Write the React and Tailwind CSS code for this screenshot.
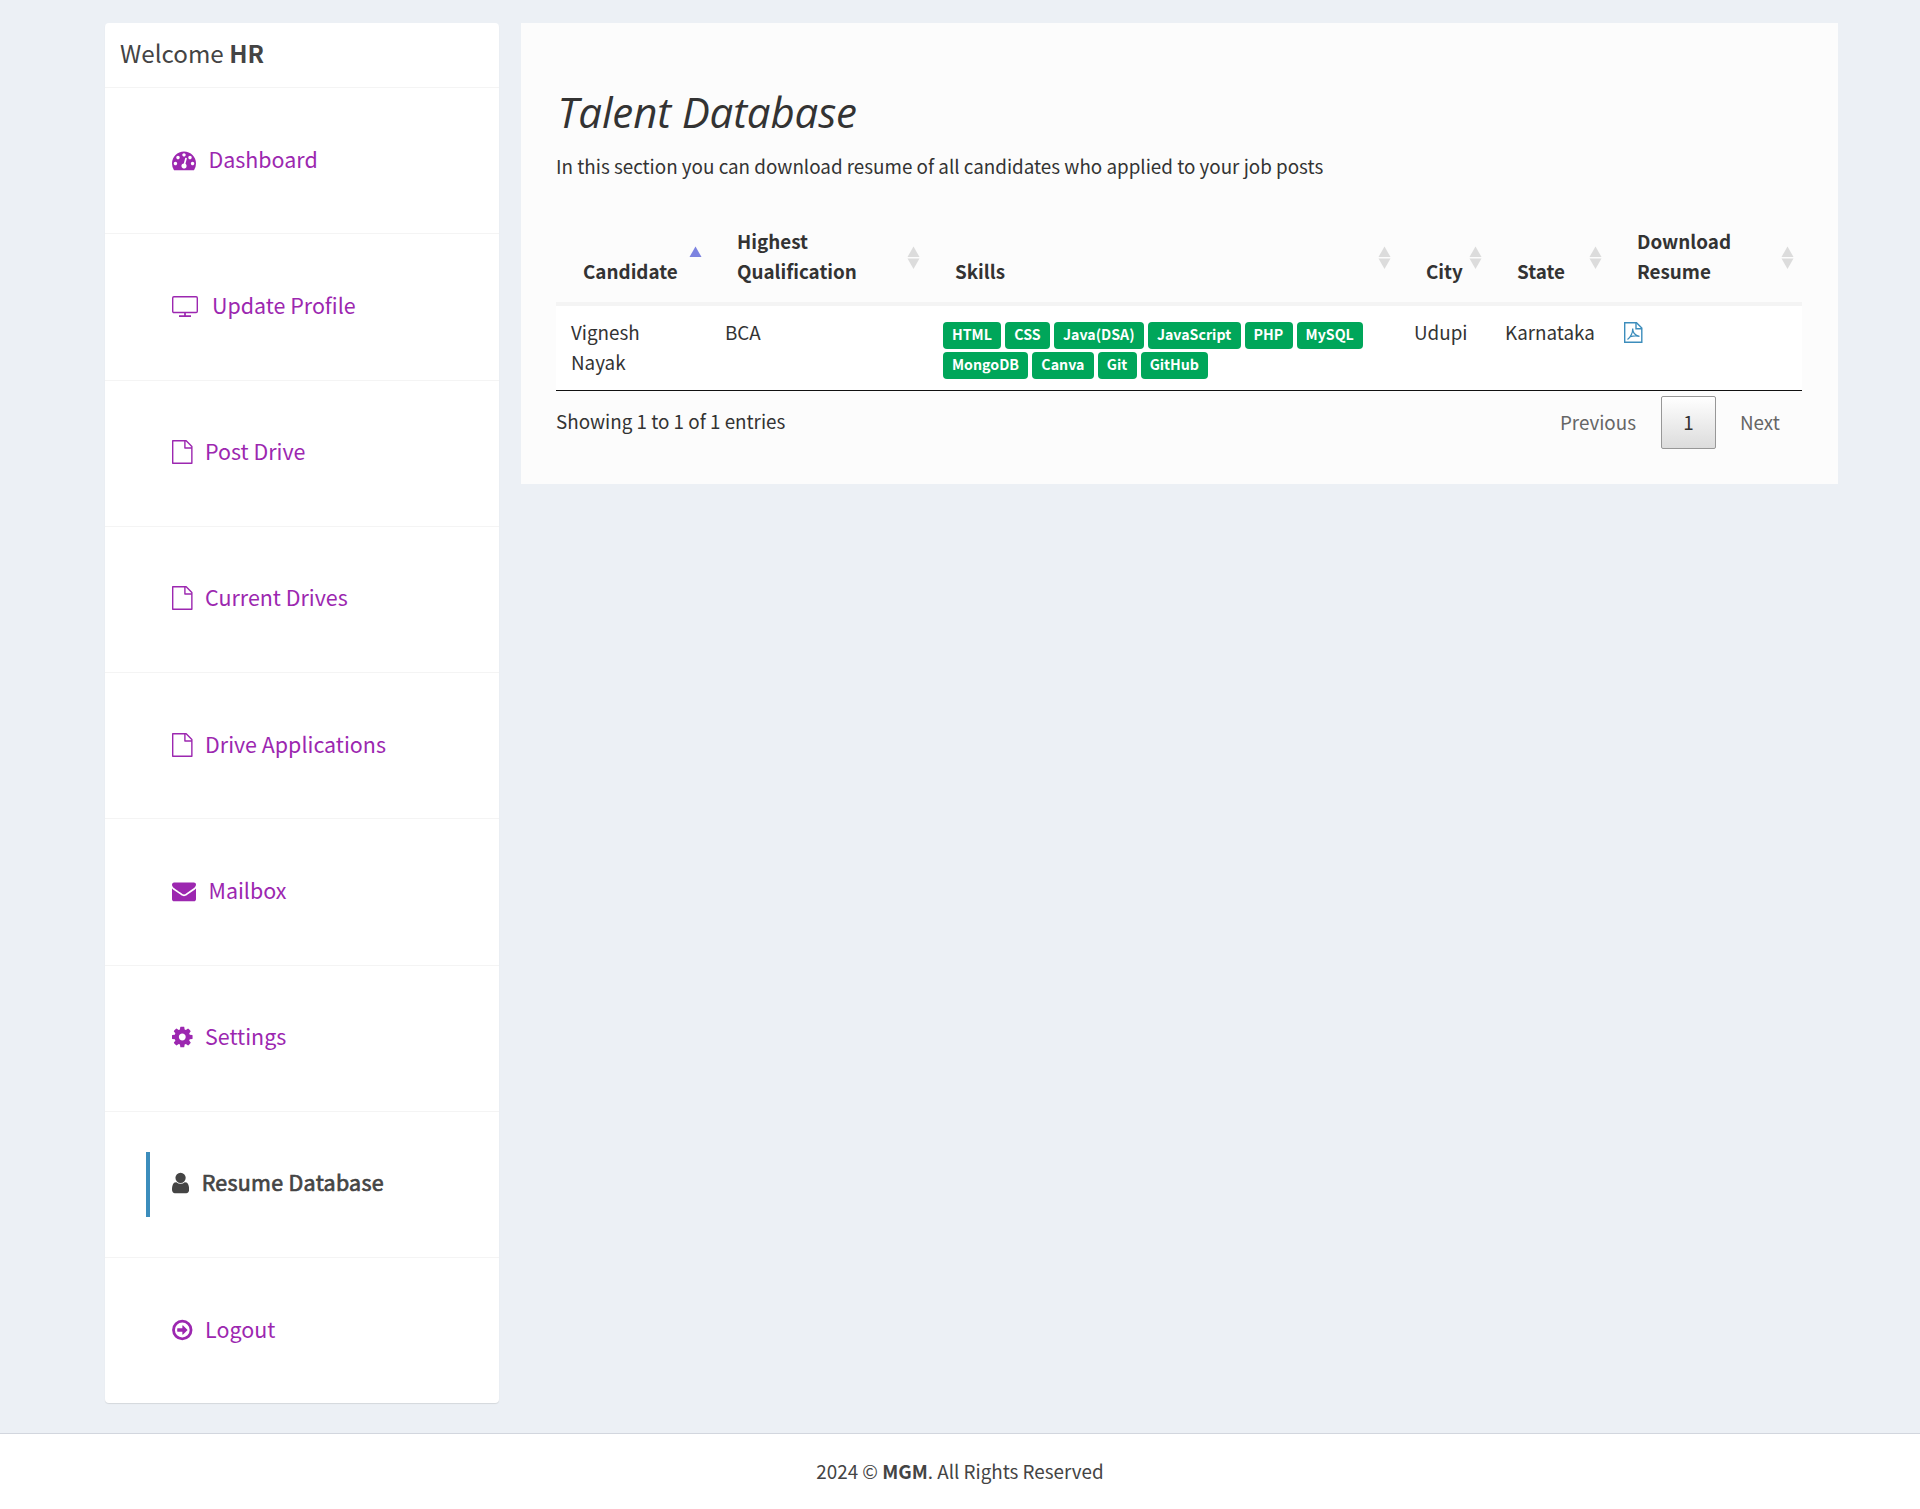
import React from "react";

const SHAPES = {
  dashboard: {
    w: 24, vb: "0 0 1792 1792",
    d: "M384 1152q0-53-37.5-90.5t-90.5-37.5-90.5 37.5-37.5 90.5 37.5 90.5 90.5 37.5 90.5-37.5 37.5-90.5zm192-448q0-53-37.5-90.5t-90.5-37.5-90.5 37.5-37.5 90.5 37.5 90.5 90.5 37.5 90.5-37.5 37.5-90.5zm428 481l101-382q6-26-7.5-48.5t-38.5-29.5-48 6.5-30 39.5l-101 382q-60 5-107 43.5t-63 98.5q-20 77 20 146t117 89 146-20 89-117q16-60-6-117t-72-91zm660-33q0-53-37.5-90.5t-90.5-37.5-90.5 37.5-37.5 90.5 37.5 90.5 90.5 37.5 90.5-37.5 37.5-90.5zm-640-640q0-53-37.5-90.5t-90.5-37.5-90.5 37.5-37.5 90.5 37.5 90.5 90.5 37.5 90.5-37.5 37.5-90.5zm448 192q0-53-37.5-90.5t-90.5-37.5-90.5 37.5-37.5 90.5 37.5 90.5 90.5 37.5 90.5-37.5 37.5-90.5zm320 448q0 261-141 483-19 29-54 29h-1402q-35 0-54-29-141-221-141-483 0-182 71-348t191-286 286-191 348-71 348 71 286 191 191 286 71 348z",
  },
  mail: {
    w: 24, vb: "0 0 1792 1792",
    d: "M1792 710v794q0 66-47 113t-113 47h-1472q-66 0-113-47t-47-113v-794q44 49 101 87 362 246 497 345 57 42 92.500 65.500t94.500 48 110 24.500h2q51 0 110-24.500t94.500-48 92.500-65.500q170-123 498-345 57-39 100-87zm0-294q0 79-49 151t-122 123q-376 261-468 325-10 7-42.500 30.500t-54 38-52 32.500-57.500 27-50 9h-2q-23 0-50-9t-57.500-27-52-32.500-54-38-42.500-30.500q-91-64-262-182.500t-205-142.500q-62-42-117-115.500t-55-136.500q0-78 41.500-130t118.500-52h1472q65 0 112.500 47t47.500 113z",
  },
  cog: {
    w: 20.57, vb: "128 0 1536 1792",
    d: "M1152 896q0-106-75-181t-181-75-181 75-75 181 75 181 181 75 181-75 75-181zm512-109v222q0 12-8 23t-20 13l-185 28q-19 54-39 91 35 50 107 138 10 12 10 25t-9 23q-27 37-99 108t-94 71q-12 0-26-9l-138-108q-44 23-91 38-16 136-29 186-7 28-36 28h-222q-14 0-24.500-8.500t-11.500-21.500l-28-184q-49-16-90-37l-141 107q-10 9-25 9-14 0-25-11-126-114-165-168-7-10-7-23 0-12 8-23 15-21 51-66.500t54-70.500q-27-50-41-99l-183-27q-13-2-21-12.500t-8-23.500v-222q0-12 8-23t19-13l186-28q14-46 39-92-40-57-107-138-10-12-10-24 0-10 9-23 26-36 98.500-107.500t94.500-71.500q13 0 26 10l138 107q44-23 91-38 16-136 29-186 7-28 36-28h222q14 0 24.500 8.500t11.500 21.500l28 184q49 16 90 37l142-107q9-9 24-9 13 0 25 10 129 119 165 170 7 8 7 22 0 12-8 23-15 21-51 66.500t-54 70.500q26 50 41 98l183 28q13 2 21 12.500t8 23.500z",
  },
  user: {
    w: 17.14, vb: "256 0 1280 1792",
    d: "M1536 1399q0 109-62.500 187t-150.500 78h-854q-88 0-150.500-78t-62.500-187q0-85 8.500-160.500t31.500-152 58.500-131 94-89 134.500-34.500q131 128 313 128t313-128q76 0 134.500 34.500t94 89 58.500 131 31.500 152 8.500 160.500zm-256-887q0 159-112.500 271.500t-271.500 112.500-271.500-112.500-112.500-271.500 112.500-271.500 271.500-112.500 271.500 112.500 112.500 271.500z",
  },
};

function Icon({ name }) {
  if (name === "logout") {
    return (
      <svg className="h-6 shrink-0" width="20.57" viewBox="128 0 1536 1792" fill="currentColor">
        <circle cx="896" cy="896" r="656" fill="none" stroke="currentColor" strokeWidth="208" />
        <path d="M1285 896q0 14-9 23l-320 320q-9 9-23 9-13 0-22.500-9.500t-9.500-22.500v-192h-352q-13 0-22.500-9.500t-9.500-22.500v-192q0-13 9.500-22.500t22.500-9.500h352v-192q0-14 9-23t23-9q12 0 24 10l319 319q9 9 9 23z" />
      </svg>
    );
  }
  if (name === "tv") {
    return (
      <svg className="mr-[1.5px] h-6 shrink-0" width="26" viewBox="0 0 26 24" fill="none" stroke="currentColor">
        <rect x="0.7" y="2.7" width="24.6" height="15.8" rx="1.2" strokeWidth="1.4" />
        <path d="M13 19v3M7 22.200h12" strokeWidth="1.700" />
      </svg>
    );
  }
  if (name === "file") {
    return (
      <svg className="h-6 shrink-0" width="20.57" viewBox="0 0 20.570 24" fill="none" stroke="currentColor" strokeWidth="1.400" strokeLinejoin="round">
        <path d="M0.700 0.700H14.200L19.870 6.400V23.300H0.700z" />
        <path d="M12.900 0.700V8H19.870" />
      </svg>
    );
  }
  const shape = SHAPES[name];
  return (
    <svg className="h-6 shrink-0" width={shape.w} viewBox={shape.vb} fill="currentColor">
      <path d={shape.d} />
    </svg>
  );
}

const NAV = [
  ["dashboard", "Dashboard"],
  ["tv", "Update Profile"],
  ["file", "Post Drive"],
  ["file", "Current Drives"],
  ["file", "Drive Applications"],
  ["mail", "Mailbox"],
  ["cog", "Settings"],
  ["user", "Resume Database"],
  ["logout", "Logout"],
];

const COLUMNS = [
  ["Candidate", "w-[154px]"],
  ["Highest Qualification", "w-[218px]"],
  ["Skills", "w-[471px]"],
  ["City", "w-[91px]"],
  ["State", "w-[120px]"],
  ["Download Resume", "w-[192px]"],
];

const SKILLS = ["HTML", "CSS", "Java(DSA)", "JavaScript", "PHP", "MySQL", "MongoDB", "Canva", "Git", "GitHub"];

function SortMark({ active }) {
  return (
    <svg width="13" height="24" viewBox="0 0 13 24" className="mt-px shrink-0">
      <path d="M6.500 0.500L12.500 11H0.500z" fill={active ? "#7c83e0" : "#dcdcdc"} />
      {!active && <path d="M0.500 12.500H12.500L6.500 23z" fill="#dcdcdc" />}
    </svg>
  );
}

export default function App() {
  return (
    <div className="flex h-[1509px] w-[1920px] flex-col overflow-hidden bg-[#ecf0f5] font-['Noto_Sans_CJK_SC',sans-serif] text-[18.82px] leading-[30px] text-[#333]">
      <div className="flex flex-1 items-start gap-[22px] pt-[23px] pl-[105px]">
        <aside className="w-[394px] rounded-[4px] bg-white text-[#444] shadow-[0_1px_1px_rgba(0,0,0,0.1)]">
          <h3 className="h-[64px] px-[15px] pt-[15px] text-[24.2px] leading-[30px]">
            Welcome <b>HR</b>
          </h3>
          <ul>
            {NAV.map(([icon, label]) => {
              const active = label === "Resume Database";
              return (
                <li key={label} className="flex h-[146.25px] items-center border-t border-[#f4f4f4] pl-[41px]">
                  <a className={active
                    ? "flex h-[65px] items-center gap-[12.5px] border-l-4 border-[#3c8dbc] pb-[2px] pl-[22px] text-[21.45px] text-[#444]"
                    : "flex h-[65px] items-center gap-[12.5px] border-l-4 border-transparent pb-[2px] pl-[22px] text-[21.45px] text-[#9c27b0]"}>
                    <Icon name={icon} />
                    <span className={active ? "pb-[2px] tracking-[0.3px] [-webkit-text-stroke:0.7px_#444]" : "pb-[2px]"}>{label}</span>
                  </a>
                </li>
              );
            })}
          </ul>
        </aside>
        <main className="h-[461px] w-[1317px] bg-[#fcfcfc] px-[35px] pt-[64px]">
          <h2 className="h-[50px] pl-[1.5px] font-['Open_Sans',sans-serif] text-[42px] leading-[50px] tracking-[-0.15px] italic">
            Talent Database
          </h2>
          <p className="mt-[14px] h-[30px]">
            In this section you can download resume of all candidates who applied to your job posts
          </p>
          <table className="mt-[31px] w-[1246px] table-fixed border-separate border-spacing-0 border-b border-[#111]">
            <thead>
              <tr className="h-[94px]">
                {COLUMNS.map(([label, width], i) => (
                  <th key={label} className={width + " border-b-4 border-[#f4f4f4] p-0"}>
                    <div className="flex h-[90px] items-center justify-between pr-2 pl-[27px] text-left font-bold">
                      <span className={label.includes(" ") ? "w-[125px] self-end pb-4" : "self-end pb-4"}>{label}</span>
                      <SortMark active={i === 0} />
                    </div>
                  </th>
                ))}
              </tr>
            </thead>
            <tbody>
              <tr className="h-[84px] bg-white align-top">
                <td className="px-[15px] pt-[11px]">Vignesh<br />Nayak</td>
                <td className="px-[15px] pt-[11px]">BCA</td>
                <td className="px-[15px] pt-4">
                  <div className="flex flex-wrap gap-x-1 gap-y-[3px]">
                    {SKILLS.map((s) => (
                      <span key={s} className="h-[27px] rounded-[4px] bg-[#00a65a] pr-[9.4px] pl-[9px] text-[14.2px] leading-[25px] font-bold text-white">{s}</span>
                    ))}
                  </div>
                </td>
                <td className="px-[15px] pt-[11px]">Udupi</td>
                <td className="px-[15px] pt-[11px]">Karnataka</td>
                <td className="px-[14px] pt-4">
                  <svg width="19" height="21" viewBox="0 0 19 21" fill="none" stroke="#3c8dbc" strokeWidth="1.400">
                    <path d="M0.700 0.700h11.800l5.300 5.300v14.300H0.700z" />
                    <path d="M12 0.700v6h6" />
                    <path d="M3.500 17.500C6 15.500 8.700 11 8.700 6.500C8.700 10.500 11 13.500 15.500 14.300C12 13.500 8.500 14 6.200 14.800" strokeWidth="1.200" />
                  </svg>
                </td>
              </tr>
            </tbody>
          </table>
          <div className="flex justify-between">
            <div className="pt-[15px]">Showing 1 to 1 of 1 entries</div>
            <div className="mt-[5px] flex text-[#666]">
              <span className="pt-[11px]">Previous</span>
              <span className="mr-6 ml-[25px] flex h-[53px] w-[55px] items-center justify-center rounded-[2px] border border-[#979797] bg-linear-to-b from-white to-[#dcdcdc] pb-px text-[#333]">1</span>
              <span className="w-[63px] pt-[11px]">Next</span>
            </div>
          </div>
        </main>
      </div>
      <footer className="h-[76px] border-t border-[#d2d6de] bg-white pt-[22px] text-center text-[#444]">
        2024 © <b>MGM</b>. All Rights Reserved
      </footer>
    </div>
  );
}
